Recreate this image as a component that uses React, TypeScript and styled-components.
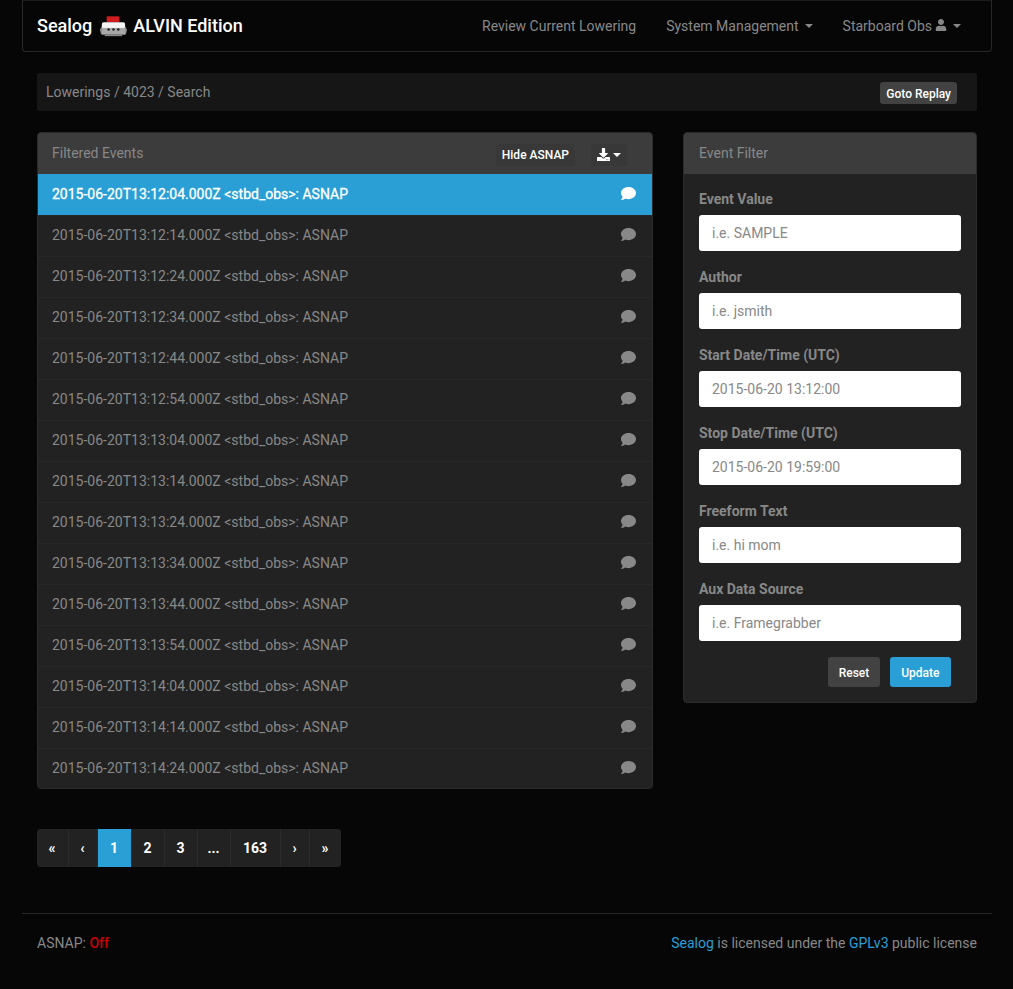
import React from 'react';
import styled, {createGlobalStyle} from 'styled-components';
import {FaComment, FaDownload, FaUser} from 'react-icons/fa';

const events = [
    '13:12:04', '13:12:14', '13:12:24', '13:12:34', '13:12:44',
    '13:12:54', '13:13:04', '13:13:14', '13:13:24', '13:13:34',
    '13:13:44', '13:13:54', '13:14:04', '13:14:14', '13:14:24',
]

const filterFields = [
    {label: 'Event Value', placeholder: 'i.e. SAMPLE'},
    {label: 'Author', placeholder: 'i.e. jsmith'},
    {label: 'Start Date/Time (UTC)', value: '2015-06-20 13:12:00'},
    {label: 'Stop Date/Time (UTC)', value: '2015-06-20 19:59:00'},
    {label: 'Freeform Text', placeholder: 'i.e. hi mom'},
    {label: 'Aux Data Source', placeholder: 'i.e. Framegrabber'},
]

const pages = [
    {text: '«', width: 31},
    {text: '‹', width: 29},
    {text: '1', width: 34, active: true},
    {text: '2', width: 33},
    {text: '3', width: 33},
    {text: '...', width: 33},
    {text: '163', width: 50},
    {text: '›', width: 29},
    {text: '»', width: 32},
]

const RovLogo = () => (
    <svg width="29" height="24" viewBox="0 0 30 24">
        <rect x="9" y="2" width="13" height="6" fill="#d01c1c"/>
        <rect x="4" y="8" width="24" height="7" rx="2" fill="#f4f4f4"/>
        <path d="M2 16 L4 12 L4 21 L3 20 Z" fill="#999"/>
        <path d="M30 16 L28 12 L28 21 L29 20 Z" fill="#999"/>
        <rect x="4" y="14" width="24" height="7" fill="#a8a8a8"/>
        <rect x="7" y="21" width="18" height="1.5" fill="#8a8a8a"/>
        <circle cx="11" cy="15.5" r="1.3" fill="#222"/>
        <circle cx="16" cy="15.5" r="1.3" fill="#222"/>
        <circle cx="21" cy="15.5" r="1.3" fill="#222"/>
    </svg>
)

export default function App() {
    return (
        <Page>
            <GlobalStyle/>
            <Navbar>
                <Brand>Sealog <RovLogo/> ALVIN Edition</Brand>
                <NavLinks>
                    <NavLink>Review Current Lowering</NavLink>
                    <NavLink>System Management <Caret/></NavLink>
                    <NavLink>Starboard Obs <FaUser size={12}/> <Caret/></NavLink>
                </NavLinks>
            </Navbar>

            <Content>
                <Breadcrumb>
                    <span>Lowerings / 4023 / Search</span>
                    <SmallButton>Goto Replay</SmallButton>
                </Breadcrumb>

                <Columns>
                    <div>
                        <EventsPanel>
                            <PanelHeading>
                                Filtered Events
                                <HeadingActions>
                                    <HeadingButton>Hide ASNAP</HeadingButton>
                                    <HeadingButton><FaDownload size={13}/> <Caret/></HeadingButton>
                                </HeadingActions>
                            </PanelHeading>
                            {events.map((time, i) => (
                                <EventRow key={time} $active={i === 0}>
                                    2015-06-20T{time}.000Z &lt;stbd_obs&gt;: ASNAP
                                    <FaComment size={15}/>
                                </EventRow>
                            ))}
                        </EventsPanel>
                        <Pagination>
                            {pages.map(page => (
                                <PageItem key={page.text} $width={page.width} $active={page.active}>
                                    {page.text}
                                </PageItem>
                            ))}
                        </Pagination>
                    </div>

                    <FilterPanel>
                        <FilterHeading>Event Filter</FilterHeading>
                        <FilterBody>
                            {filterFields.map(field => (
                                <FormGroup key={field.label}>
                                    <FieldLabel>{field.label}</FieldLabel>
                                    <FieldInput readOnly placeholder={field.placeholder} value={field.value}/>
                                </FormGroup>
                            ))}
                            <FormButtons>
                                <FormButton>Reset</FormButton>
                                <FormButton $primary>Update</FormButton>
                            </FormButtons>
                        </FilterBody>
                    </FilterPanel>
                </Columns>
            </Content>

            <Footer>
                <span>ASNAP: <OffLabel>Off</OffLabel></span>
                <span><FooterLink>Sealog</FooterLink> is licensed under the <FooterLink>GPLv3</FooterLink> public license</span>
            </Footer>
        </Page>
    )
}

// Styles
const GlobalStyle = createGlobalStyle`
  html, body {
    margin: 0;
    background: #060606;
  }

  body {
    font-family: Roboto, "Liberation Sans", sans-serif;
    font-size: 14px;
    line-height: 20px;
    color: #888;
  }

  * {
    box-sizing: border-box;
  }
`

const Page = styled.div`
  width: 1013px;
  height: 989px;
  padding: 0 21px 0 22px;
  overflow: hidden;
`

const Navbar = styled.nav`
  display: flex;
  align-items: center;
  justify-content: space-between;

  height: 52px;
  padding: 0 30px 0 14px;

  background: #060606;
  border: 1px solid #282828;
  border-top-color: #1c1c1c;
  border-radius: 0 0 4px 4px;
`

const Brand = styled.div`
  display: flex;
  align-items: center;
  gap: 6px;

  font-size: 18px;
  font-weight: 500;
  color: #fff;
`

const NavLinks = styled.div`
  display: flex;
  gap: 30px;
`

const NavLink = styled.span`
  display: inline-flex;
  align-items: center;
  gap: 3px;
  color: #888;

  svg {
    margin-bottom: 2px;
  }
`

const Caret = styled.span`
  display: inline-block;
  width: 0;
  height: 0;
  margin-left: 3px;

  border-top: 4px solid currentColor;
  border-left: 4px solid transparent;
  border-right: 4px solid transparent;
`

const Content = styled.div`
  padding: 21px 15px 0;
`

const Breadcrumb = styled.div`
  display: flex;
  align-items: center;
  justify-content: space-between;

  height: 38px;
  padding: 0 20px 0 9px;
  margin-bottom: 21px;

  background: #161616;
  border-radius: 2px;
`

const SmallButton = styled.button`
  height: 22px;
  margin-top: 2px;
  padding: 1px 6px 0;

  font: 500 12px Roboto, sans-serif;
  color: #fff;

  background: #424242;
  border: 0;
  border-radius: 3px;
`

const Columns = styled.div`
  display: grid;
  grid-template-columns: 616px 294px;
  gap: 30px;
  align-items: start;
`

const Panel = styled.section`
  background: #222;
  border: 1px solid #2b2b2b;
  border-radius: 4px;
  overflow: hidden;
`

const EventsPanel = styled(Panel)`
  height: 657px;
`

const FilterPanel = styled(Panel)`
  height: 571px;
`

const PanelHeading = styled.div`
  display: flex;
  align-items: center;
  justify-content: space-between;

  height: 41px;
  padding: 0 25px 1px 14px;

  color: #888;
  background: #3c3c3c;
`

const FilterHeading = styled(PanelHeading)`
  padding-left: 15px;
`

const HeadingActions = styled.div`
  display: flex;
  gap: 16px;
  margin-top: 3px;
`

const HeadingButton = styled.button`
  display: inline-flex;
  align-items: center;

  height: 22px;
  padding: 0 6px;

  font: 500 12px Roboto, sans-serif;
  color: #fff;

  background: #383838;
  border: 0;
  border-radius: 3px;
`

const EventRow = styled.div<{ $active?: boolean }>`
  display: flex;
  align-items: center;
  justify-content: space-between;

  height: 41px;
  padding: 0 16px 1px 14px;

  color: ${props => props.$active ? '#fff' : '#888'};
  background: ${props => props.$active ? '#2a9fd6' : '#222'};
  -webkit-text-stroke: ${props => props.$active ? '0.3px #fff' : '0'};

  & + & {
    box-shadow: inset 0 1px 0 #282828;
  }

  svg {
    margin-bottom: 2px;
  }
`

const Pagination = styled.div`
  display: inline-flex;
  height: 38px;
  margin-top: 40px;

  background: #222;
  border-radius: 4px;
  overflow: hidden;
`

const PageItem = styled.span<{ $width: number, $active?: boolean }>`
  display: flex;
  align-items: center;
  justify-content: center;
  flex: none;

  width: ${props => props.$width}px;
  padding-right: 1px;

  font-weight: 700;
  color: #fff;
  background: ${props => props.$active ? '#2a9fd6' : '#222'};

  & + & {
    border-left: 1px solid ${props => props.$active ? '#2a9fd6' : '#2b2b2b'};
  }
`

const FilterBody = styled.div`
  padding: 14px 15px 15px;
`

const FormGroup = styled.div`
  height: 78px;
`

const FieldLabel = styled.label`
  display: block;
  height: 27px;
  padding-top: 1px;
  font-weight: 700;
  color: #888;
`

const FieldInput = styled.input`
  display: block;
  width: 100%;
  height: 36px;
  padding: 0 13px;

  font: 14px Roboto, sans-serif;
  color: #888;

  background: #fff;
  border: 0;
  border-radius: 3px;
  outline: none;

  &::placeholder {
    color: #888;
    opacity: 1;
  }
`

const FormButtons = styled.div`
  display: flex;
  justify-content: flex-end;
  gap: 10px;
  padding: 1px 10px 0 0;
`

const FormButton = styled.button<{ $primary?: boolean }>`
  height: 30px;
  padding: 1px ${props => props.$primary ? '11.5px' : '10.5px'} 0;

  font: 500 12px Roboto, sans-serif;
  color: #fff;

  background: ${props => props.$primary ? '#2a9fd6' : '#424242'};
  border: 0;
  border-radius: 3px;
`

const Footer = styled.footer`
  display: flex;
  align-items: center;
  justify-content: space-between;

  height: 58px;
  margin-top: 46px;
  padding: 0 15px;

  border-top: 1px solid #282828;
`

const OffLabel = styled.span`
  font-weight: 500;
  color: #c00;
`

const FooterLink = styled.a`
  color: #2a9fd6;
`
